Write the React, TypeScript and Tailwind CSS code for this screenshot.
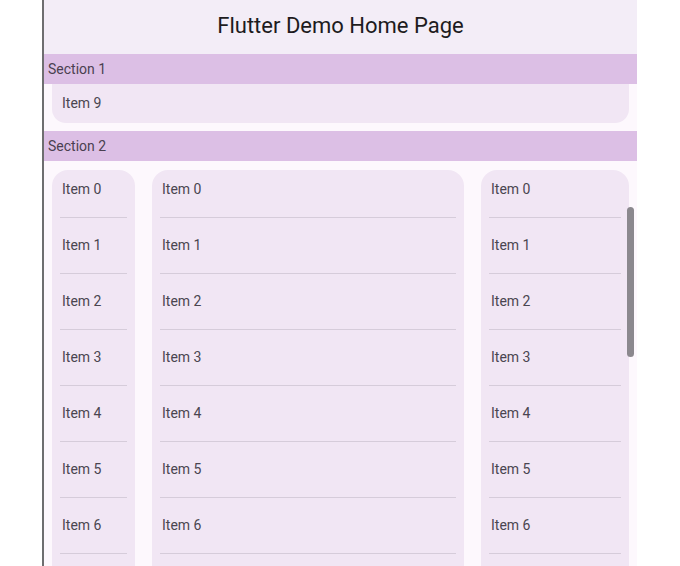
const rows = [0, 1, 2, 3, 4, 5, 6]

const Column = ({ width }: { width: string }) => (
    <div className={`${width} shrink-0 rounded-t-[16px] overflow-hidden bg-[#f1e6f4]`}>
        <div className="-mt-[8px]">
            {rows.map((n) => (
                <div key={n} className="h-[56px] flex flex-col">
                    <div className="flex-1 flex items-center pl-[10px] text-[14px] text-[#4a4550]">
                        Item {n}
                    </div>
                    <div className="mx-[8px] h-px bg-[#d6ccda]" />
                </div>
            ))}
        </div>
    </div>
)

export default function App() {
    return (
        <div
            className="w-[680px] h-[566px] bg-white flex overflow-hidden"
            style={{ fontFamily: "Roboto, 'Noto Sans', sans-serif" }}
        >
            <div className="w-[42px] shrink-0" />
            <div className="w-[2px] shrink-0 bg-[#6e6e70]" />
            <div className="relative w-[593px] shrink-0 h-full bg-[#fdf8fd] flex flex-col overflow-hidden">
                <header className="h-[54px] shrink-0 bg-[#f3edf7] flex items-center justify-center pb-[3px] text-[22px] text-[#1d1b20]">
                    Flutter Demo Home Page
                </header>
                <div className="h-[30px] shrink-0 bg-[#dcbfe5] flex items-center pl-[4px] text-[14px] text-[#4a3f50]">
                    Section 1
                </div>
                <div className="mx-[8px] h-[39px] shrink-0 bg-[#f1e6f4] rounded-b-[14px] flex items-center pl-[10px] text-[14px] text-[#4a4550]">
                    Item 9
                </div>
                <div className="mt-[8px] h-[30px] shrink-0 bg-[#dcbfe5] flex items-center pl-[4px] text-[14px] text-[#4a3f50]">
                    Section 2
                </div>
                <div className="mt-[9px] flex gap-[17px] px-[8px] flex-1 overflow-hidden">
                    <Column width="w-[83px]" />
                    <Column width="w-[312px]" />
                    <Column width="w-[148px]" />
                </div>
                <div className="absolute left-[583px] top-[207px] w-[7px] h-[150px] rounded-full bg-[#8b888e]" />
            </div>
        </div>
    )
}
